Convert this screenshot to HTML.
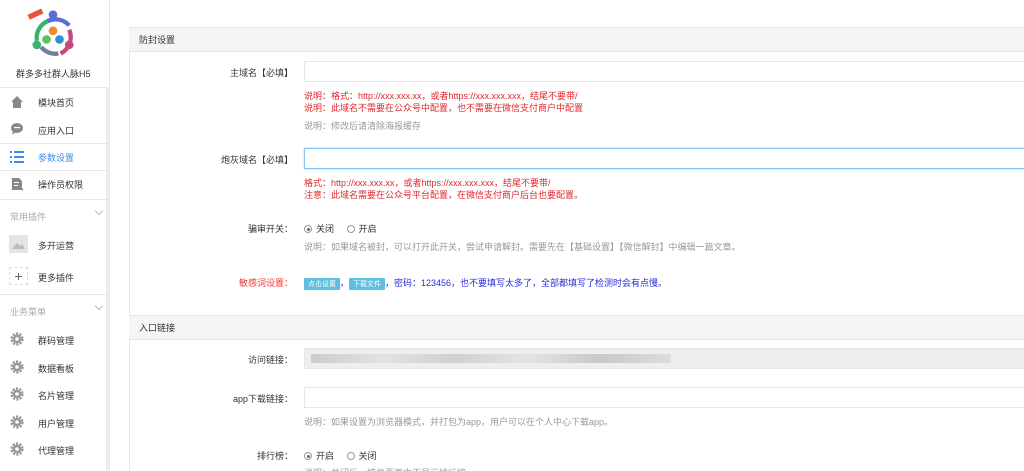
<!DOCTYPE html>
<html style="height:471px;overflow:hidden"><head><meta charset="utf-8"><style>
*{margin:0;padding:0;box-sizing:border-box}
body{width:1024px;height:471px;overflow:hidden;background:#fff;font-family:"Liberation Sans","Noto Sans CJK SC",sans-serif;font-size:9px;color:#333;position:relative}
.abs{position:absolute;white-space:nowrap}
#side{position:absolute;left:0;top:0;width:110px;height:471px;background:#fff;border-right:1px solid #e8e8e8}
.sep{position:absolute;left:0;width:108px;height:1px;background:#e6e6e6}
.mi{position:absolute;left:38px;font-size:9px;color:#333}
.ic{position:absolute;left:10px;width:14px;height:14px}
.gear{position:absolute;left:10px;width:14px;height:14px}
.grp{position:absolute;left:10px;color:#aaa;font-size:9px}
.chev{position:absolute;left:96px;width:6px;height:6px;border-right:1px solid #bbb;border-bottom:1px solid #bbb;transform:rotate(45deg)}
#panel{position:absolute;left:129px;top:27px;width:900px;height:444px;border:1px solid #e6e6e6;border-bottom:none;background:#fff}
.ph{position:absolute;left:129px;width:900px;height:25px;background:#f5f5f5;border-top:1px solid #e6e6e6;border-bottom:1px solid #e6e6e6;padding-left:10px;line-height:24px;font-size:9px;color:#333}
.lbl{position:absolute;right:731px;font-size:9px;color:#333;text-align:right}
.inp{position:absolute;left:304px;width:730px;height:21px;border:1px solid #e6e6e6;background:#fff}
.red{color:#e0262b}
.gray{color:#999}
.rd{display:inline-block;width:8px;height:8px;border:1px solid #999;border-radius:50%;vertical-align:-1px;margin-right:4px;position:relative}
.rd.on:after{content:"";position:absolute;left:1.5px;top:1.5px;width:3px;height:3px;border-radius:50%;background:#666}
.btn{display:inline-block;background:#5bc0de;color:#fff;padding:1px 4px;font-size:7px;border-radius:1px}
</style></head><body>
<div id="side">
  <svg class="abs" style="left:26px;top:8px" width="54" height="50" viewBox="0 0 50 46">
    <rect x="2" y="3" width="14" height="5" fill="#e8573b" transform="rotate(-25 9 6)"/>
    <path d="M10 30 A17 17 0 0 1 20 12" stroke="#35b46b" stroke-width="4" fill="none"/>
    <path d="M20 12 A17 17 0 0 1 40 16" stroke="#5b6fd0" stroke-width="4" fill="none"/>
    <path d="M40 20 A17 17 0 0 1 32 42" stroke="#c5487f" stroke-width="4" fill="none"/>
    <path d="M14 36 A17 17 0 0 0 30 42" stroke="#7a7a9a" stroke-width="4" fill="none"/>
    <circle cx="10" cy="34" r="4" fill="#35b46b"/><circle cx="40" cy="34" r="4" fill="#c5487f"/><circle cx="25" cy="6" r="4" fill="#5b6fd0"/>
    <circle cx="25" cy="21" r="4" fill="#f08a2c"/><circle cx="19" cy="29" r="4" fill="#5fc15a"/><circle cx="31" cy="29" r="4" fill="#2f8fd8"/>
  </svg>
  <div class="abs" style="left:16px;top:67px;font-size:9px;color:#333">群多多社群人脉H5</div>
  <div class="sep" style="top:87px"></div>
  <div class="abs" style="left:106px;top:88px;width:3px;height:383px;background:#eee"></div>
  <svg class="ic" style="top:95px" viewBox="0 0 14 14"><path d="M1 7 L7 1 L13 7 L11 7 L11 13 L3 13 L3 7Z" fill="#888"/></svg>
  <div class="mi" style="top:96px">模块首页</div>
  <svg class="ic" style="top:122px" viewBox="0 0 14 14"><ellipse cx="7" cy="6" rx="6" ry="5" fill="#888"/><path d="M3 9 L2 13 L6 10Z" fill="#888"/><rect x="4" y="5" width="6" height="1.2" fill="#fff"/></svg>
  <div class="mi" style="top:124px">应用入口</div>
  <div class="sep" style="top:143px"></div>
  <svg class="ic" style="top:150px" viewBox="0 0 14 14"><g fill="#3a8ee6"><rect x="0" y="1" width="2" height="2"/><rect x="4" y="1" width="10" height="2"/><rect x="0" y="6" width="2" height="2"/><rect x="4" y="6" width="10" height="2"/><rect x="0" y="11" width="2" height="2"/><rect x="4" y="11" width="10" height="2"/></g></svg>
  <div class="mi" style="top:151px;color:#3a8ee6">参数设置</div>
  <div class="sep" style="top:170px"></div>
  <svg class="ic" style="top:177px" viewBox="0 0 14 14"><path d="M2 1 H9 L12 4 V13 H2Z" fill="#888"/><path d="M9 9 L13 13" stroke="#888" stroke-width="1.5"/><rect x="4" y="5" width="5" height="1" fill="#fff"/><rect x="4" y="8" width="4" height="1" fill="#fff"/></svg>
  <div class="mi" style="top:178px">操作员权限</div>
  <div class="sep" style="top:199px"></div>
  <div class="grp" style="top:210px">常用插件</div><div class="chev" style="top:208px"></div>
  <div class="abs" style="left:9px;top:235px;width:19px;height:18px;background:#e4e4e4"><svg width="19" height="18"><path d="M3 14 L8 8 L11 11 L13 9 L16 14Z" fill="#bbb"/></svg></div>
  <div class="mi" style="top:239px">多开运营</div>
  <div class="abs" style="left:9px;top:267px;width:19px;height:18px;border:1px dashed #ddd;text-align:center;line-height:16px;font-size:14px;color:#666">+</div>
  <div class="mi" style="top:271px">更多插件</div>
  <div class="sep" style="top:294px"></div>
  <div class="grp" style="top:305px">业务菜单</div><div class="chev" style="top:303px"></div>
  <svg class="gear" style="top:332px" viewBox="0 0 14 14"><circle cx="7" cy="7" r="5" fill="none" stroke="#999" stroke-width="3.2" stroke-dasharray="2 1.2"/><circle cx="7" cy="7" r="4.2" fill="#999"/><circle cx="7" cy="7" r="1.8" fill="#fff"/></svg><div class="mi" style="top:334px">群码管理</div>
  <svg class="gear" style="top:360px" viewBox="0 0 14 14"><circle cx="7" cy="7" r="5" fill="none" stroke="#999" stroke-width="3.2" stroke-dasharray="2 1.2"/><circle cx="7" cy="7" r="4.2" fill="#999"/><circle cx="7" cy="7" r="1.8" fill="#fff"/></svg><div class="mi" style="top:362px">数据看板</div>
  <svg class="gear" style="top:387px" viewBox="0 0 14 14"><circle cx="7" cy="7" r="5" fill="none" stroke="#999" stroke-width="3.2" stroke-dasharray="2 1.2"/><circle cx="7" cy="7" r="4.2" fill="#999"/><circle cx="7" cy="7" r="1.8" fill="#fff"/></svg><div class="mi" style="top:389px">名片管理</div>
  <svg class="gear" style="top:415px" viewBox="0 0 14 14"><circle cx="7" cy="7" r="5" fill="none" stroke="#999" stroke-width="3.2" stroke-dasharray="2 1.2"/><circle cx="7" cy="7" r="4.2" fill="#999"/><circle cx="7" cy="7" r="1.8" fill="#fff"/></svg><div class="mi" style="top:417px">用户管理</div>
  <svg class="gear" style="top:442px" viewBox="0 0 14 14"><circle cx="7" cy="7" r="5" fill="none" stroke="#999" stroke-width="3.2" stroke-dasharray="2 1.2"/><circle cx="7" cy="7" r="4.2" fill="#999"/><circle cx="7" cy="7" r="1.8" fill="#fff"/></svg><div class="mi" style="top:444px">代理管理</div>
</div>
<div id="panel"></div>
<div class="ph" style="top:27px">防封设置</div>
<div class="lbl" style="top:66px">主域名【必填】</div>
<div class="inp" style="top:61px"></div>
<div class="abs red" style="left:304px;top:89px">说明：格式：http://xxx.xxx.xx，或者https://xxx.xxx.xxx，结尾不要带/</div>
<div class="abs red" style="left:304px;top:101px">说明：此域名不需要在公众号中配置，也不需要在微信支付商户中配置</div>
<div class="abs gray" style="left:304px;top:119px">说明：修改后请清除海报缓存</div>
<div class="lbl" style="top:153px">炮灰域名【必填】</div>
<div class="inp" style="top:148px;border-color:#8cc4f0;box-shadow:0 0 2px #a9d3f5"></div>
<div class="abs red" style="left:304px;top:176px">格式：http://xxx.xxx.xx，或者https://xxx.xxx.xxx，结尾不要带/</div>
<div class="abs red" style="left:304px;top:188px">注意：此域名需要在公众号平台配置，在微信支付商户后台也要配置。</div>
<div class="lbl" style="top:222px">骗审开关：</div>
<div class="abs" style="left:304px;top:222px"><span class="rd on"></span>关闭&nbsp;&nbsp;&nbsp;&nbsp;&nbsp;<span class="rd"></span>开启</div>
<div class="abs gray" style="left:304px;top:240px">说明：如果域名被封，可以打开此开关，尝试申请解封。需要先在【基础设置】【微信解封】中编辑一篇文章。</div>
<div class="lbl red" style="top:276px;color:#f03a3a">敏感词设置：</div>
<div class="abs" style="left:304px;top:276px;color:#2b2bdc"><span class="btn">点击设置</span>，<span class="btn">下载文件</span>，密码：123456，也不要填写太多了，全部都填写了检测时会有点慢。</div>
<div class="ph" style="top:315px">入口链接</div>
<div class="lbl" style="top:353px">访问链接：</div>
<div class="inp" style="top:348px;background:#eee;border-color:#e6e6e6"><div style="position:absolute;left:6px;top:5px;width:360px;height:9px;background:linear-gradient(90deg,#ccc,#e2e2e2 20%,#d0d0d0 40%,#e4e4e4 60%,#c8c8c8 80%,#ddd)"></div></div>
<div class="lbl" style="top:392px">app下载链接：</div>
<div class="inp" style="top:387px"></div>
<div class="abs gray" style="left:304px;top:415px">说明：如果设置为浏览器模式，并打包为app，用户可以在个人中心下载app。</div>
<div class="lbl" style="top:449px">排行榜：</div>
<div class="abs" style="left:304px;top:449px"><span class="rd on"></span>开启&nbsp;&nbsp;&nbsp;&nbsp;&nbsp;<span class="rd"></span>关闭</div>
<div class="abs gray" style="left:304px;top:466px">说明：关闭后，榜单页面中不显示排行榜。</div>
</body></html>
